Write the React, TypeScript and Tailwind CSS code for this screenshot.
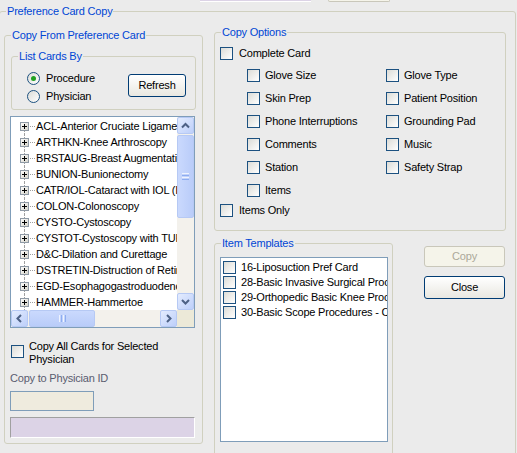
import React from 'react';

type Dir = 'up' | 'down' | 'left' | 'right';

const procedures = [
  'ACL-Anterior Cruciate Ligament Reconstruction',
  'ARTHKN-Knee Arthroscopy',
  'BRSTAUG-Breast Augmentation',
  'BUNION-Bunionectomy',
  'CATR/IOL-Cataract with IOL (Implant)',
  'COLON-Colonoscopy',
  'CYSTO-Cystoscopy',
  'CYSTOT-Cystoscopy with TURP',
  'D&C-Dilation and Curettage',
  'DSTRETIN-Distruction of Retina',
  'EGD-Esophagogastroduodenoscopy',
  'HAMMER-Hammertoe',
];

const copyOptions = [
  'Glove Size',
  'Glove Type',
  'Skin Prep',
  'Patient Position',
  'Phone Interruptions',
  'Grounding Pad',
  'Comments',
  'Music',
  'Station',
  'Safety Strap',
  'Items',
];

const templates = [
  '16-Liposuction Pref Card',
  '28-Basic Invasive Surgical Procedures',
  '29-Orthopedic Basic Knee Procedures',
  '30-Basic Scope Procedures - Colon',
];

const GroupTitle = ({ children }: { children: React.ReactNode }) => (
  <span className="absolute -top-[7px] left-[6px] px-[1px] bg-[#ebebeb] text-[#0046d5] leading-[13px] whitespace-nowrap">
    {children}
  </span>
);

const CheckBox = () => (
  <span className="block w-[13px] h-[13px] shrink-0 border border-[#1c5180] bg-linear-to-br from-[#dcdcd7] to-white" />
);

const Radio = ({ checked = false }: { checked?: boolean }) => (
  <span className="flex items-center justify-center w-[13px] h-[13px] shrink-0 rounded-full border border-[#1c5180] bg-linear-to-br from-[#dcdcd7] to-white">
    {checked && <span className="w-[5px] h-[5px] rounded-full bg-[#21a121]" />}
  </span>
);

const XpButton = ({
  children,
  disabled = false,
  className = '',
}: {
  children: React.ReactNode;
  disabled?: boolean;
  className?: string;
}) => (
  <div
    className={`flex items-center justify-center rounded-[3px] border ${
      disabled
        ? 'border-[#c9c7ba] bg-[#f5f4ea] text-[#aca899]'
        : 'border-[#003c74] bg-linear-to-b from-white to-[#e9e8e1] text-black'
    } ${className}`}
  >
    {children}
  </div>
);

const ScrollBtn = ({ dir }: { dir: Dir }) => {
  const paths: Record<Dir, string> = {
    up: 'M4 9.5L7.5 6L11 9.5',
    down: 'M4 6L7.5 9.5L11 6',
    left: 'M9 4L5.5 7.5L9 11',
    right: 'M6 4L9.5 7.5L6 11',
  };
  return (
    <div className="w-[17px] h-[17px] shrink-0 rounded-[2px] border border-[#b6c9f4] bg-linear-to-br from-[#e4ecfe] to-[#bdcffa]">
      <svg width="15" height="15" viewBox="0 0 15 15">
        <path d={paths[dir]} stroke="#4d6185" strokeWidth="2" fill="none" />
      </svg>
    </div>
  );
};

const PlusBox = () => (
  <svg width="9" height="9" viewBox="0 0 9 9" className="relative z-10 shrink-0 ml-[9px]">
    <defs>
      <linearGradient id="pb" x1="0" y1="0" x2="1" y2="1">
        <stop offset="0" stopColor="#ffffff" />
        <stop offset="1" stopColor="#d4d2c8" />
      </linearGradient>
    </defs>
    <rect x="0.5" y="0.5" width="8" height="8" fill="url(#pb)" stroke="#8f9aa6" />
    <path d="M2 4.5H7M4.5 2V7" stroke="#000" />
  </svg>
);

const TreeList = () => (
  <div className="mt-[6px] ml-[5px] w-[185px] h-[212px] border border-[#7f9db9] bg-white flex flex-col">
    <div className="flex h-[193px]">
      <div className="w-[166px] overflow-hidden pt-[1px]">
        {procedures.map((p, i) => (
          <div key={p} className="relative flex items-center h-[16px] whitespace-nowrap">
            <span
              className={`absolute left-[13px] w-0 border-l border-dotted border-[#a0a0a0] ${
                i === 0 ? 'top-[8px] bottom-0' : 'top-0 bottom-0'
              }`}
            />
            <PlusBox />
            <span className="shrink-0 w-[5px] ml-[1px] border-t border-dotted border-[#a0a0a0]" />
            <span className="shrink-0 ml-[1px]">{p}</span>
          </div>
        ))}
      </div>
      {/* vertical scrollbar */}
      <div className="w-[17px] flex flex-col bg-[#f3f1ec]">
        <ScrollBtn dir="up" />
        <div className="mt-[1px] h-[83px] rounded-[2px] border border-[#b6c9f4] bg-linear-to-r from-[#cad9fd] to-[#b9ccf9] flex flex-col items-center justify-center gap-[1px]">
          <span className="w-[7px] h-[1px] bg-[#eef3fe]" />
          <span className="w-[7px] h-[1px] bg-[#8eadf0]" />
          <span className="w-[7px] h-[1px] bg-[#eef3fe]" />
          <span className="w-[7px] h-[1px] bg-[#8eadf0]" />
        </div>
        <div className="flex-1" />
        <ScrollBtn dir="down" />
      </div>
    </div>
    {/* horizontal scrollbar */}
    <div className="flex h-[17px]">
      <div className="w-[166px] flex bg-[#f3f1ec]">
        <ScrollBtn dir="left" />
        <div className="ml-[1px] w-[66px] rounded-[2px] border border-[#b6c9f4] bg-linear-to-b from-[#cad9fd] to-[#b9ccf9] flex items-center justify-center gap-[1px]">
          <span className="h-[7px] w-[1px] bg-[#eef3fe]" />
          <span className="h-[7px] w-[1px] bg-[#8eadf0]" />
          <span className="h-[7px] w-[1px] bg-[#eef3fe]" />
          <span className="h-[7px] w-[1px] bg-[#8eadf0]" />
        </div>
        <div className="flex-1" />
        <ScrollBtn dir="right" />
      </div>
      <div className="w-[17px] bg-[#ece9d8]" />
    </div>
  </div>
);

export default function App() {
  return (
    <div className="w-[517px] h-[453px] overflow-hidden bg-[#ebebeb] text-[11px] leading-[13px] tracking-[-0.2px] text-black font-['Liberation_Sans',Arial,sans-serif]">
      {/* bottom edge of the controls above */}
      <div className="flex h-[2px]">
        <div className="ml-[200px] w-[111px] bg-[#dcd3e6] border-b border-white" />
        <div className="ml-[17px] w-[62px] border-b border-x border-[#c9c7ba] rounded-b-[3px] bg-[#f5f4ea]" />
      </div>

      <div className="relative mt-[9px] ml-[-1px] w-[517px] h-[470px] border border-[#d0d0bf] rounded-[3px]">
        <GroupTitle>Preference Card Copy</GroupTitle>
        <div className="flex items-start pl-[4px]">
          {/* left column */}
          <div className="relative mt-[23px] w-[199px] h-[409px] border border-[#d0d0bf] rounded-[3px]">
            <GroupTitle>Copy From Preference Card</GroupTitle>

            <div className="relative mt-[20px] ml-[6px] w-[185px] h-[54px] border border-[#d0d0bf] rounded-[3px]">
              <GroupTitle>List Cards By</GroupTitle>
              <div className="flex items-start pt-[12px] pl-[15px]">
                <div className="w-[101px] flex flex-col">
                  <div className="flex items-center h-[18px] gap-[6px]">
                    <Radio checked />
                    <span>Procedure</span>
                  </div>
                  <div className="flex items-center h-[18px] gap-[6px]">
                    <Radio />
                    <span>Physician</span>
                  </div>
                </div>
                <XpButton className="mt-[5px] w-[58px] h-[23px]">Refresh</XpButton>
              </div>
            </div>

            <TreeList />

            <div className="flex items-start mt-[12px] ml-[6px]">
              <div className="mt-[5px]">
                <CheckBox />
              </div>
              <span className="ml-[5px] w-[145px]">Copy All Cards for Selected Physician</span>
            </div>

            <div className="mt-[6px] ml-[5px] text-[#5a5c70]">Copy to Physician ID</div>
            <div className="mt-[6px] ml-[5px] w-[84px] h-[20px] border border-[#7f9db9] bg-[#efebde]" />
            <div className="mt-[6px] ml-[5px] w-[185px] h-[21px] border-t border-l border-[#a0a0a0] border-b border-r border-b-white border-r-white bg-[#dcd3e6]" />
          </div>

          {/* right column */}
          <div className="ml-[11px] flex flex-col">
            <div className="relative mt-[20px] w-[292px] h-[199px] border border-[#d0d0bf] rounded-[3px]">
              <GroupTitle>Copy Options</GroupTitle>
              <div className="pt-[10px] pl-[5px]">
                <div className="flex items-center h-[21px] gap-[6px]">
                  <CheckBox />
                  <span>Complete Card</span>
                </div>
                <div className="grid grid-cols-[139px_1fr] auto-rows-[23px] pl-[27px]">
                  {copyOptions.map((o) => (
                    <div key={o} className="flex items-center gap-[5px] whitespace-nowrap">
                      <CheckBox />
                      <span>{o}</span>
                    </div>
                  ))}
                </div>
                <div className="flex items-center h-[17px] gap-[6px]">
                  <CheckBox />
                  <span>Items Only</span>
                </div>
              </div>
            </div>

            <div className="flex items-start mt-[12px]">
              <div className="relative w-[179px] h-[230px] border border-[#d0d0bf] rounded-[3px]">
                <GroupTitle>Item Templates</GroupTitle>
                <div className="mt-[13px] ml-[5px] w-[168px] h-[185px] border border-[#7f9db9] bg-white pt-[2px] pl-[2px] overflow-hidden">
                  {templates.map((t) => (
                    <div key={t} className="flex items-center h-[15px] gap-[5px] whitespace-nowrap">
                      <CheckBox />
                      <span className="shrink-0">{t}</span>
                    </div>
                  ))}
                </div>
              </div>
              <div className="ml-[31px] mt-[3px] flex flex-col">
                <XpButton disabled className="w-[81px] h-[21px]">
                  Copy
                </XpButton>
                <XpButton className="mt-[9px] w-[81px] h-[23px]">Close</XpButton>
              </div>
            </div>
          </div>
        </div>
      </div>
    </div>
  );
}
